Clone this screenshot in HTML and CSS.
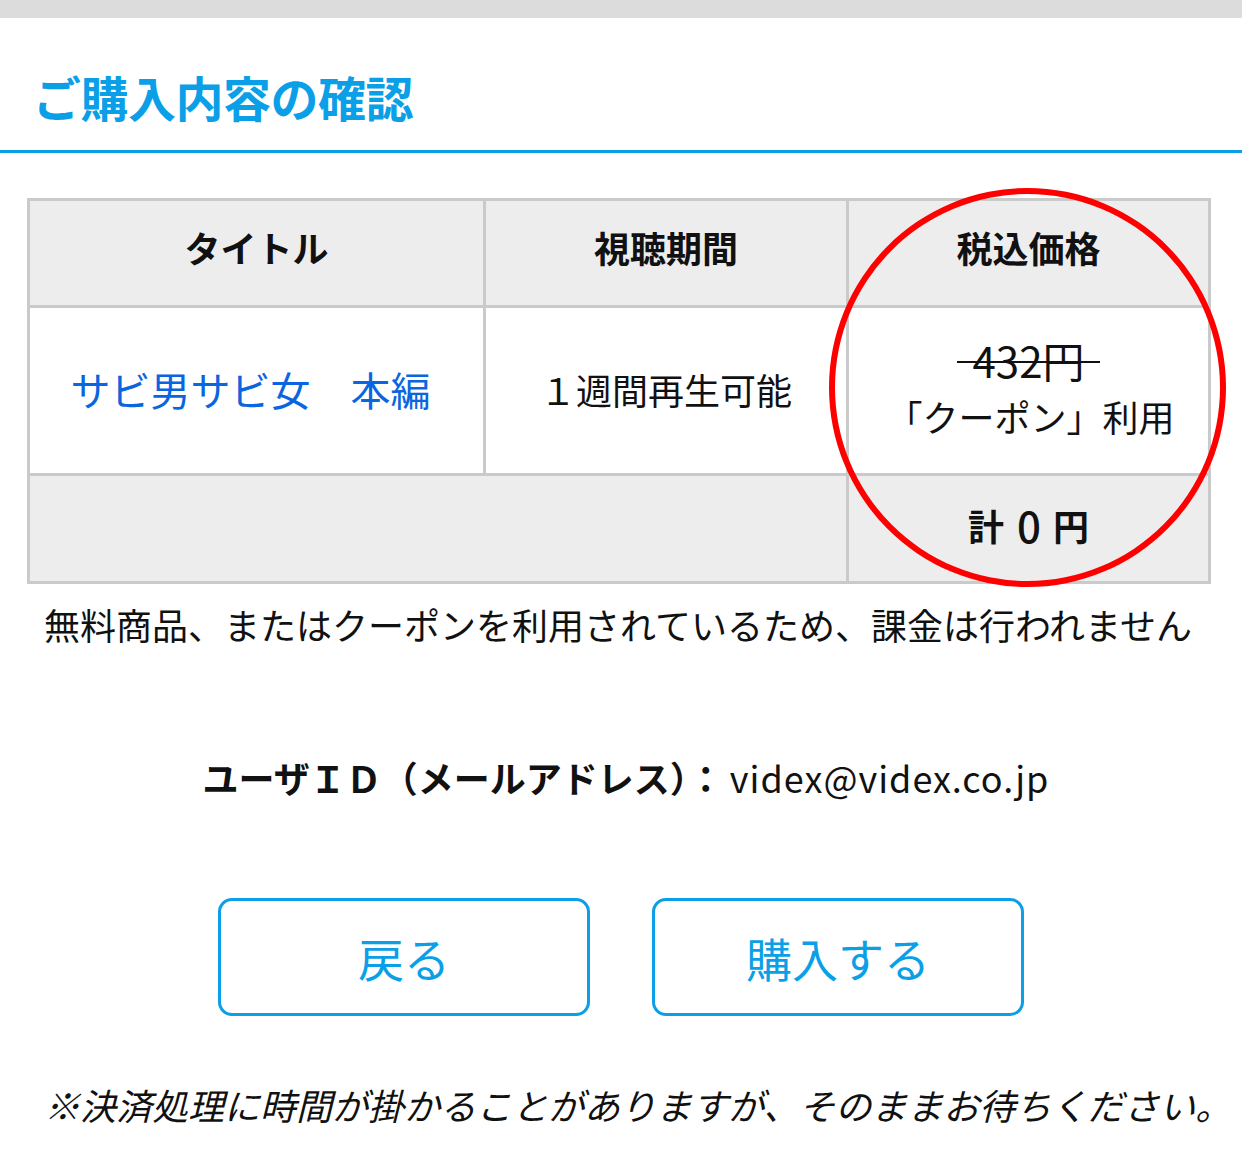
FILE: index.html
```html
<!DOCTYPE html>
<html lang="ja">
<head>
<meta charset="utf-8">
<title>ご購入内容の確認</title>
<link rel="stylesheet" href="styles.css">
</head>
<body>
<div class="topbar"></div>
<header class="page-head">
  <h1 class="page-title">ご購入内容の確認</h1>
</header>

<div class="order">
  <div class="order-grid">
    <div class="cell head">タイトル</div>
    <div class="cell head">視聴期間</div>
    <div class="cell head last">税込価格</div>

    <div class="cell body"><a class="title-link" href="#">サビ男サビ女　本編</a></div>
    <div class="cell body period">１週間再生可能</div>
    <div class="cell body last price">
      <div class="old-price"><span class="strike">432円</span></div>
      <div class="coupon">「クーポン」利用</div>
    </div>

    <div class="cell foot span2"></div>
    <div class="cell foot last total">計<span class="zero">0</span>円</div>
  </div>
  <div class="mark"></div>
</div>

<p class="note">無料商品、またはクーポンを利用されているため、課金は行われません</p>

<p class="user-id"><span class="label">ユーザＩＤ（メールアドレス）：</span><span class="mail">videx@videx.co.jp</span></p>

<div class="actions">
  <a class="btn" href="#">戻る</a>
  <a class="btn" href="#">購入する</a>
</div>

<p class="wait">※決済処理に時間が掛かることがありますが、そのままお待ちください。</p>
</body>
</html>
```

FILE: styles.css
```css
html, body {
  margin: 0;
  padding: 0;
  background: #fff;
}
body {
  font-family: "Noto Sans CJK JP", "Noto Sans", sans-serif;
  color: #111;
  width: 1242px;
  min-height: 1170px;
}
.topbar {
  height: 18px;
  background: #dcdcdc;
}
.page-head {
  box-sizing: border-box;
  height: 135px;
  border-bottom: 3px solid #0a9fe6;
  padding: 54px 0 0 33px;
}
.page-title {
  margin: 0;
  font-size: 48px;
  line-height: 48px;
  font-weight: 700;
  color: #0a9fe6;
  letter-spacing: -0.5px;
}
.order {
  position: relative;
  margin: 45px 31px 0 27px;
}
.order-grid {
  display: grid;
  grid-template-columns: 456px 363px 359px;
  grid-template-rows: 107px 168px 105px;
  border: 3px solid #cacaca;
}
.cell {
  display: flex;
  flex-direction: column;
  align-items: center;
  justify-content: center;
  border-right: 3px solid #cacaca;
  border-bottom: 3px solid #cacaca;
  font-size: 36px;
  line-height: 1.3;
}
.cell.last {
  border-right: 0;
}
.cell.head {
  background: #ededed;
  font-weight: 700;
  color: #111;
  padding-bottom: 12px;
}
.cell.body {
  background: #fff;
}
.cell.foot {
  background: #ededed;
  border-bottom: 0;
}
.span2 {
  grid-column: span 2;
}
.title-link {
  color: #0a66e0;
  text-decoration: none;
  font-size: 40px;
  padding-right: 12px;
  padding-bottom: 4px;
}
.period {
  color: #111;
  padding-bottom: 2px;
}
.price {
  padding-bottom: 10px;
}
.old-price {
  font-size: 42px;
  line-height: 61px;
}
.strike {
  padding: 0 16px;
  background: linear-gradient(#111, #111) no-repeat 0 55% / 100% 2px;
}
.coupon {
  font-size: 36px;
  line-height: 52px;
  padding-left: 4px;
}
.total {
  flex-direction: row;
  font-weight: 700;
  font-size: 36px;
  padding-bottom: 6px;
}
.zero {
  font-weight: 500;
  font-size: 42px;
  margin: 0 12px 0 13px;
}
.mark {
  position: absolute;
  left: 802px;
  top: -10px;
  width: 397px;
  height: 399px;
  box-sizing: border-box;
  border: 6px solid #f00;
  border-radius: 50%;
  pointer-events: none;
}
.note {
  margin: 13px 0 0 44px;
  font-size: 36px;
  line-height: 54px;
  color: #111;
  white-space: nowrap;
}
.user-id {
  margin: 99px 0 0;
  text-align: center;
  font-size: 36px;
  line-height: 54px;
  color: #111;
  padding-left: 10px;
  white-space: nowrap;
}
.user-id .label {
  font-weight: 700;
}
.user-id .mail {
  margin-left: 6px;
  letter-spacing: 1px;
}
.actions {
  display: flex;
  justify-content: center;
  gap: 62px;
  margin-top: 94px;
}
.btn {
  width: 372px;
  height: 118px;
  box-sizing: border-box;
  border: 3px solid #0a9fe6;
  border-radius: 14px;
  display: flex;
  align-items: center;
  justify-content: center;
  color: #0a9fe6;
  font-size: 46px;
  line-height: 1;
  text-decoration: none;
  font-weight: 400;
}
.wait {
  margin: 62px 0 0 44px;
  font-size: 36px;
  line-height: 52px;
  font-style: italic;
  color: #111;
  white-space: nowrap;
}
```
